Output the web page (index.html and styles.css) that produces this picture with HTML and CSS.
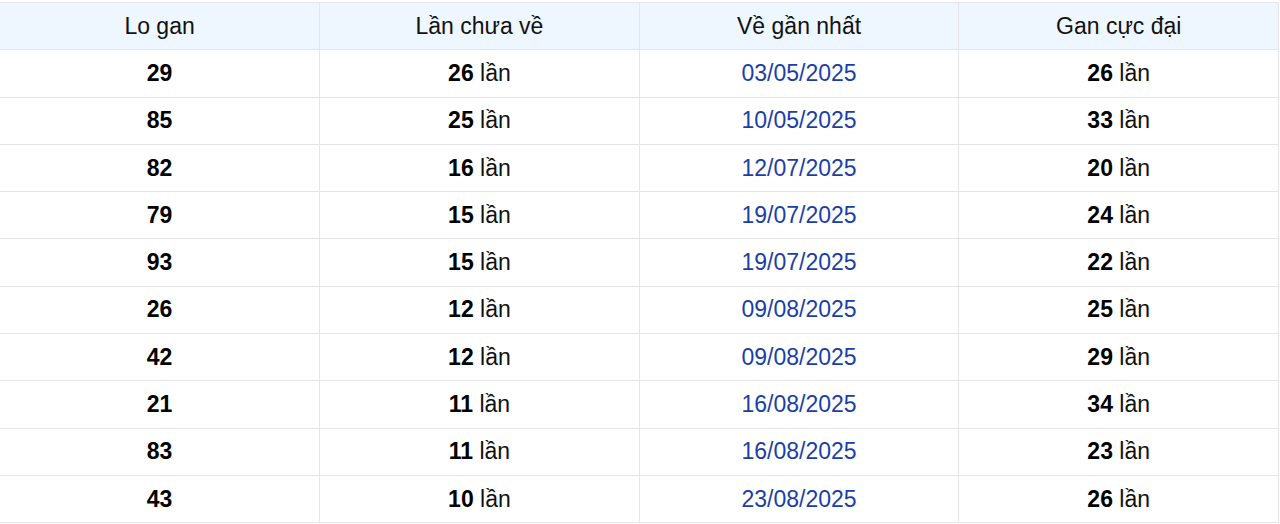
FILE: index.html
```html
<!DOCTYPE html>
<html lang="vi">
<head>
<meta charset="utf-8">
<link rel="stylesheet" href="styles.css">
</head>
<body>
<table class="gan-table">
  <thead>
    <tr><th>Lo gan</th><th>Lần chưa về</th><th>Về gần nhất</th><th>Gan cực đại</th></tr>
  </thead>
  <tbody>
    <tr><td><b>29</b></td><td><b>26</b> lần</td><td class="date">03/05/2025</td><td><b>26</b> lần</td></tr>
    <tr><td><b>85</b></td><td><b>25</b> lần</td><td class="date">10/05/2025</td><td><b>33</b> lần</td></tr>
    <tr><td><b>82</b></td><td><b>16</b> lần</td><td class="date">12/07/2025</td><td><b>20</b> lần</td></tr>
    <tr><td><b>79</b></td><td><b>15</b> lần</td><td class="date">19/07/2025</td><td><b>24</b> lần</td></tr>
    <tr><td><b>93</b></td><td><b>15</b> lần</td><td class="date">19/07/2025</td><td><b>22</b> lần</td></tr>
    <tr><td><b>26</b></td><td><b>12</b> lần</td><td class="date">09/08/2025</td><td><b>25</b> lần</td></tr>
    <tr><td><b>42</b></td><td><b>12</b> lần</td><td class="date">09/08/2025</td><td><b>29</b> lần</td></tr>
    <tr><td><b>21</b></td><td><b>11</b> lần</td><td class="date">16/08/2025</td><td><b>34</b> lần</td></tr>
    <tr><td><b>83</b></td><td><b>11</b> lần</td><td class="date">16/08/2025</td><td><b>23</b> lần</td></tr>
    <tr><td><b>43</b></td><td><b>10</b> lần</td><td class="date">23/08/2025</td><td><b>26</b> lần</td></tr>
  </tbody>
</table>
</body>
</html>
```
FILE: styles.css
```css
html, body {
  margin: 0;
  padding: 0;
  background: #ffffff;
}
body {
  padding-top: 2px;
  font-family: "Liberation Sans", Arial, sans-serif;
  color: #111111;
}
.gan-table {
  width: 1279px;
  border-collapse: collapse;
  table-layout: fixed;
  font-size: 23px;
}
.gan-table th,
.gan-table td {
  border: 1px solid #e3e5e8;
  text-align: center;
  vertical-align: middle;
  height: 47.3px;
  padding: 0;
  box-sizing: border-box;
}
.gan-table tr > :first-child {
  border-left: none;
}
.gan-table th {
  background: #eef6ff;
  font-weight: normal;
  color: #111111;
}
.gan-table b {
  font-weight: bold;
  color: #000000;
}
.gan-table td.date {
  color: #1b3ea6;
}
```
